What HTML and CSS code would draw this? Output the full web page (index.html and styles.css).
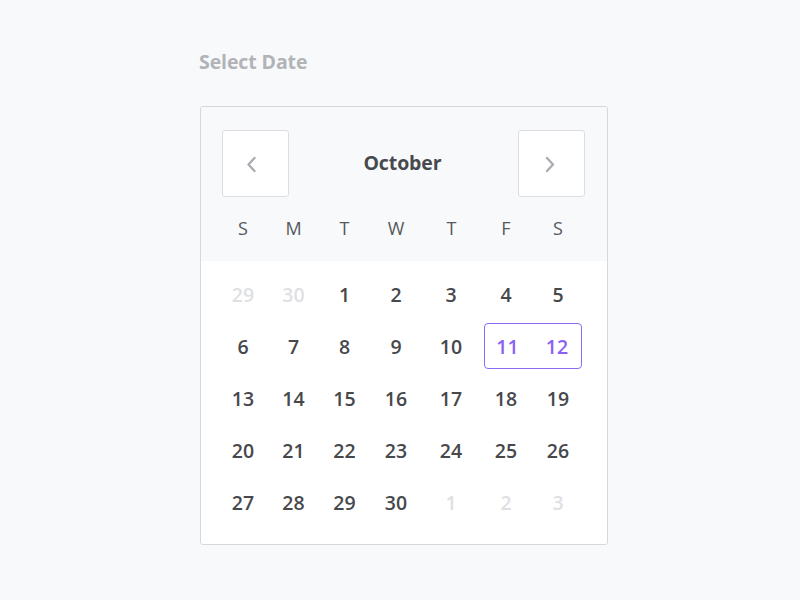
FILE: index.html
```html
<!DOCTYPE html>
<html>
<head>
<meta charset="utf-8">
<link rel="stylesheet" href="styles.css">
</head>
<body>
<div class="wrap">
  <div class="label">Select Date</div>
  <div class="card">
    <div class="head">
      <div class="nav">
        <button class="btn" aria-label="Previous month">
          <svg width="20" height="20" viewBox="0 0 20 20"><path d="M8.5 4 L2.5 10.5 L8.5 17" fill="none" stroke="#abadb2" stroke-width="2.4" stroke-linecap="round" stroke-linejoin="round"/></svg>
        </button>
        <div class="month">October</div>
        <button class="btn" aria-label="Next month">
          <svg width="20" height="20" viewBox="0 0 20 20"><path d="M6 4 L12 10.5 L6 17" fill="none" stroke="#abadb2" stroke-width="2.4" stroke-linecap="round" stroke-linejoin="round"/></svg>
        </button>
      </div>
      <div class="weekdays">
        <span>S</span><span>M</span><span>T</span><span>W</span><span>T</span><span>F</span><span>S</span>
      </div>
    </div>
    <div class="days">
      <span class="muted">29</span><span class="muted">30</span><span>1</span><span>2</span><span>3</span><span>4</span><span>5</span>
      <span>6</span><span>7</span><span>8</span><span>9</span><span>10</span>
      <div class="range"><span class="sel">11</span><span class="sel">12</span></div>
      <span>13</span><span>14</span><span>15</span><span>16</span><span>17</span><span>18</span><span>19</span>
      <span>20</span><span>21</span><span>22</span><span>23</span><span>24</span><span>25</span><span>26</span>
      <span>27</span><span>28</span><span>29</span><span>30</span><span class="muted">1</span><span class="muted">2</span><span class="muted">3</span>
    </div>
  </div>
</div>
</body>
</html>
```
FILE: styles.css
```css
html, body {
  margin: 0;
  padding: 0;
  background: #f8f9fb;
  font-family: "Open Sans", "Noto Sans", sans-serif;
}
.wrap {
  width: 408px;
  margin-left: 200px;
  padding-top: 48px;
}
.label {
  font-size: 19.5px;
  font-weight: 700;
  color: #b1b3b7;
  line-height: 28px;
  margin-left: -1px;
  letter-spacing: -0.1px;
}
.card {
  margin-top: 30px;
  border: 1px solid #d5d7db;
  border-radius: 3px;
  background: #ffffff;
  overflow: hidden;
}
.head {
  background: #f8f9fb;
  padding: 23px 22px 7px 21px;
}
.nav {
  display: flex;
  align-items: center;
  justify-content: space-between;
}
.btn {
  width: 67px;
  height: 67px;
  border: 1px solid #dcdee2;
  border-radius: 3px;
  background: #ffffff;
  display: flex;
  align-items: center;
  justify-content: center;
  padding: 0;
}
.month {
  font-size: 19.5px;
  font-weight: 700;
  color: #47494d;
  letter-spacing: -0.1px;
  margin-top: -2px;
  margin-left: -2px;
}
.weekdays {
  display: grid;
  grid-template-columns: 50px 51px 51px 52px 58px 52px 52px;
  margin: 5px 0 0 -4px;
  height: 52px;
  line-height: 52px;
  text-align: center;
  font-size: 18px;
  font-weight: 400;
  color: #56585c;
}
.weekdays span:nth-child(5) {
  padding-left: 1px;
}
.days {
  display: grid;
  grid-template-columns: 50px 51px 51px 52px 58px 52px 52px;
  grid-auto-rows: 52px;
  padding: 7px 0 16px 17px;
  text-align: center;
  font-size: 19.5px;
  font-weight: 600;
  color: #46484c;
}
.days span {
  display: flex;
  align-items: center;
  justify-content: center;
}
.days .muted {
  color: #dfe0e3;
}
.range {
  grid-column: span 2;
  display: grid;
  grid-template-columns: 1fr 1fr;
  margin: 3px 2px 3px 4px;
  border: 1px solid #8c6cf1;
  border-radius: 4px;
}
.days .sel {
  color: #8a62f3;
}
.range .sel:first-child {
  padding-right: 3px;
}
```
